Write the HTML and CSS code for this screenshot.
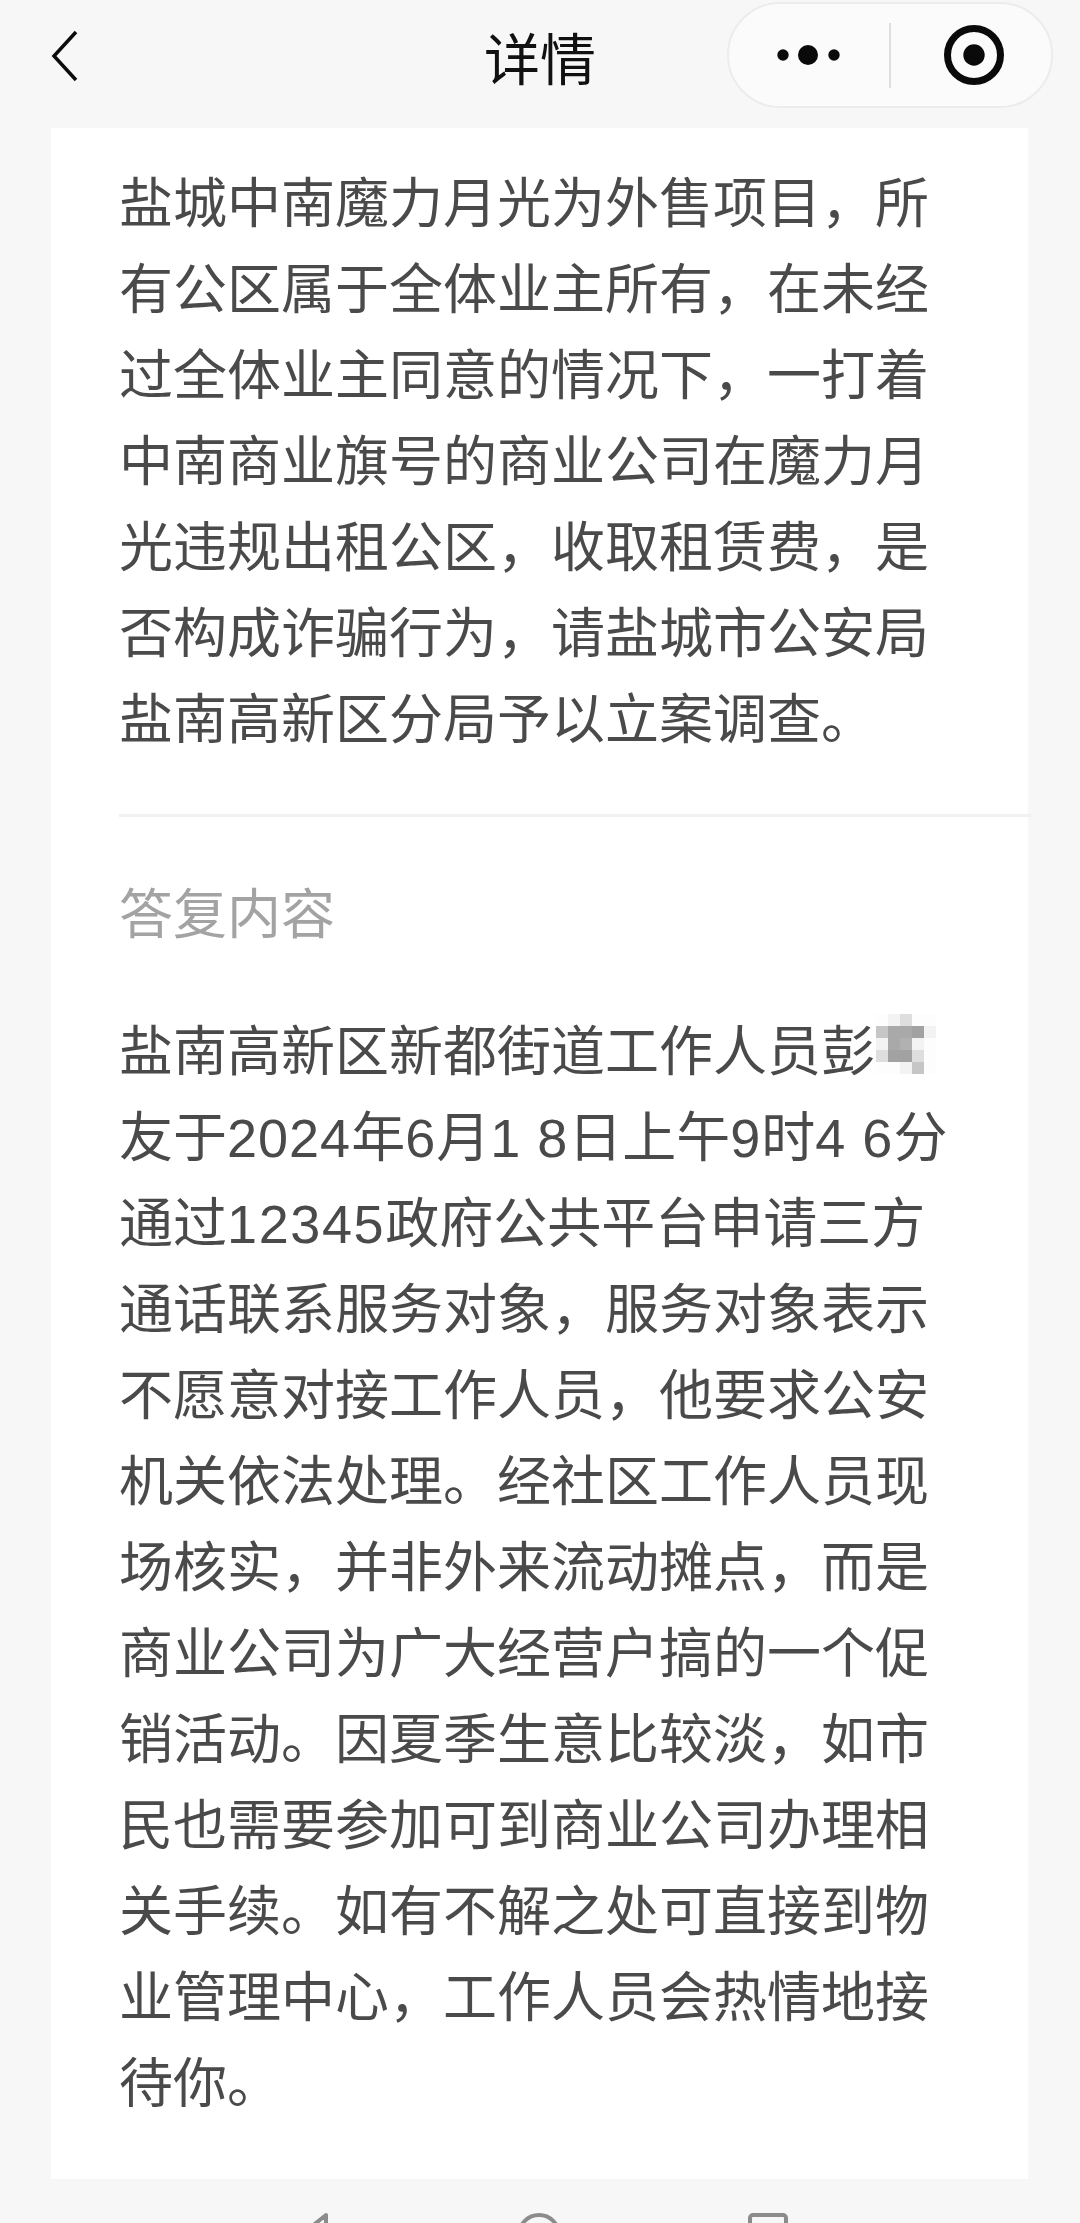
FILE: index.html
```html
<!DOCTYPE html>
<html lang="zh-CN">
<head>
<meta charset="utf-8">
<title>详情</title>
<link rel="stylesheet" href="styles.css">
</head>
<body>
<div class="page">
  <header class="nav">
    <svg class="back" width="34" height="54" viewBox="0 0 34 54"><path d="M27 2 L5 26 L27 50" fill="none" stroke="#0c0c0c" stroke-width="3.500"/></svg>
    <h1 class="title">详情</h1>
    <div class="capsule">
      <svg class="more" width="63" height="22" viewBox="0 0 63 22"><circle cx="6" cy="11" r="5.700" fill="#0a0a0a"/><circle cx="31" cy="11" r="10" fill="#0a0a0a"/><circle cx="57" cy="11" r="5.700" fill="#0a0a0a"/></svg>
      <span class="sep"></span>
      <svg class="target" width="62" height="62" viewBox="0 0 62 62"><circle cx="31" cy="31" r="26.500" fill="none" stroke="#0a0a0a" stroke-width="7"/><circle cx="31" cy="31" r="10.700" fill="#0a0a0a"/></svg>
    </div>
  </header>
  <main class="card">
    <section class="question">
      <p class="line">盐城中南魔力月光为外售项目，所</p>
      <p class="line">有公区属于全体业主所有，在未经</p>
      <p class="line">过全体业主同意的情况下，一打着</p>
      <p class="line">中南商业旗号的商业公司在魔力月</p>
      <p class="line">光违规出租公区，收取租赁费，是</p>
      <p class="line">否构成诈骗行为，请盐城市公安局</p>
      <p class="line">盐南高新区分局予以立案调查。</p>
    </section>
    <h2 class="label">答复内容</h2>
    <section class="answer">
      <p class="line">盐南高新区新都街道工作人员彭<span class="mosaic"><i class="g0"></i><i class="g1"></i><i class="g2"></i><i class="g0"></i><i class="g0"></i><i class="g3"></i><i class="g4"></i><i class="g4"></i><i class="g5"></i><i class="g1"></i><i class="g1"></i><i class="g4"></i><i class="g6"></i><i class="g1"></i><i class="g0"></i><i class="g2"></i><i class="g5"></i><i class="g5"></i><i class="g2"></i><i class="g0"></i><i class="g0"></i><i class="g0"></i><i class="g1"></i><i class="g3"></i><i class="g0"></i></span></p>
      <p class="line">友于<span class="num">2024</span>年<span class="num">6</span>月<span class="num">1 8</span>日上午<span class="num">9</span>时<span class="num">4 6</span>分</p>
      <p class="line">通过<span class="num-wide">12345</span>政府公共平台申请三方</p>
      <p class="line">通话联系服务对象，服务对象表示</p>
      <p class="line">不愿意对接工作人员，他要求公安</p>
      <p class="line">机关依法处理。经社区工作人员现</p>
      <p class="line">场核实，并非外来流动摊点，而是</p>
      <p class="line">商业公司为广大经营户搞的一个促</p>
      <p class="line">销活动。因夏季生意比较淡，如市</p>
      <p class="line">民也需要参加可到商业公司办理相</p>
      <p class="line">关手续。如有不解之处可直接到物</p>
      <p class="line">业管理中心，工作人员会热情地接</p>
      <p class="line">待你。</p>
    </section>
  </main>
  <footer class="sysbar">
    <svg width="34" height="10" viewBox="0 0 34 10"><path d="M30 2 L5 22 L30 42 Z" fill="none" stroke="#8c8c8c" stroke-width="4" stroke-linejoin="round"/></svg>
    <svg width="44" height="10" viewBox="0 0 44 10"><circle cx="22" cy="22" r="20" fill="none" stroke="#8c8c8c" stroke-width="4"/></svg>
    <svg width="40" height="10" viewBox="0 0 40 10"><rect x="2" y="2" width="36" height="40" rx="3" fill="none" stroke="#8c8c8c" stroke-width="4"/></svg>
  </footer>
</div>
</body>
</html>
```
FILE: styles.css
```css
* { box-sizing: border-box; margin: 0; padding: 0; }
html, body { background: #f7f7f7; }
body { width: 1080px; height: 2223px; overflow: hidden; font-family: "Liberation Sans", "Noto Sans CJK SC", sans-serif; }
.page { width: 1080px; height: 2223px; display: flex; flex-direction: column; }

.nav { height: 128px; flex: none; position: relative; }
.back { position: absolute; left: 49px; top: 30px; }
.title { text-align: center; padding-top: 23px; font-size: 56px; line-height: 66px; font-weight: 400; color: #111; font-family: "Noto Sans CJK SC", sans-serif; }
.capsule { position: absolute; left: 727px; top: 2px; width: 326px; height: 106px; border-radius: 53px; background: #fbfbfb; border: 2px solid #ececec; display: flex; align-items: center; }
.more { margin-left: 48px; flex: none; }
.sep { width: 2px; height: 65px; background: #dedede; margin-left: 49px; flex: none; }
.target { margin-left: 52px; flex: none; }

.card { flex: none; width: 977px; height: 2051px; margin-left: 51px; background: #fff; padding-left: 68px; }
.question { padding-top: 33px; height: 689px; border-bottom: 3px solid #f1f1f1; margin-right: -3px; }
.line { font-size: 54px; line-height: 86px; height: 86px; color: #4a4a4a; white-space: nowrap; position: relative; font-weight: 400; }
.num { letter-spacing: 1px; }
.num-wide { letter-spacing: 1.6px; }
.label { font-size: 54px; line-height: 66px; font-weight: 400; color: #a3a3a3; margin-top: 65px; }
.answer { margin-top: 61px; }
.mosaic { position: absolute; left: 757px; top: 5px; display: grid; grid-template-columns: repeat(5, 12px); grid-auto-rows: 12px; }
.mosaic i { display: block; }
.g0 { background: #fdfdfd; }
.g1 { background: #f3f3f3; }
.g2 { background: #dedede; }
.g3 { background: #c6c6c6; }
.g4 { background: #a9a9a9; }
.g5 { background: #a2a2a2; }
.g6 { background: #b1b1b1; }

.sysbar { flex: 1; display: flex; align-items: flex-end; overflow: hidden; padding-left: 296px; gap: 187px; }
.sysbar svg { flex: none; display: block; }
```
